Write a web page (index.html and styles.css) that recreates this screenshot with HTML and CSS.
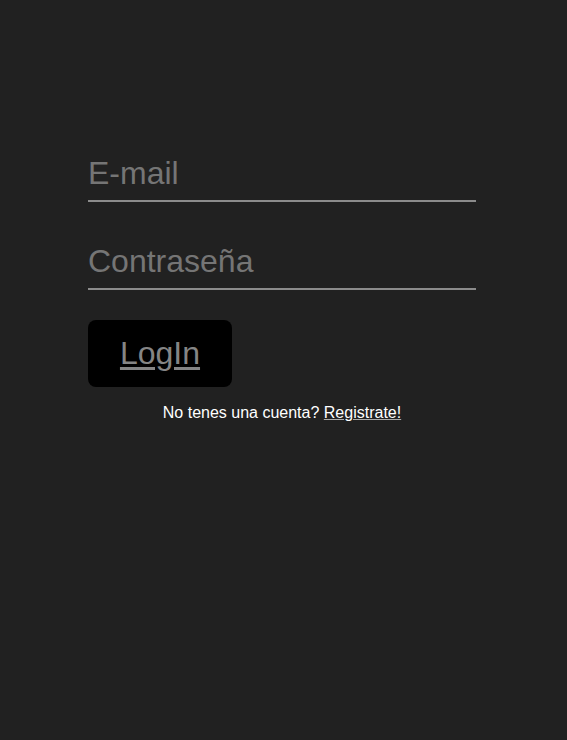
FILE: index.html
```html
<!DOCTYPE html>
<html lang="es">
<head>
<meta charset="utf-8">
<title>Login</title>
<link rel="stylesheet" href="styles.css">
</head>
<body>
<main class="login">
  <form class="login-form">
    <input class="field" type="email" placeholder="E-mail">
    <input class="field field-pass" type="password" placeholder="Contraseña">
    <button class="btn" type="button">LogIn</button>
    <p class="register">No tenes una cuenta? <a href="#" class="register-link">Registrate!</a></p>
  </form>
</main>
</body>
</html>
```
FILE: styles.css
```css
html, body {
  margin: 0;
  padding: 0;
  background: #212121;
  height: 100%;
}
body {
  font-family: "Liberation Sans", Arial, sans-serif;
}
.login {
  padding-top: 151px;
  padding-left: 88px;
}
.login-form {
  width: 388px;
  display: flex;
  flex-direction: column;
  align-items: flex-start;
}
.field {
  display: block;
  box-sizing: border-box;
  width: 100%;
  height: 51px;
  padding: 4px 0 8px;
  margin: 0;
  background: transparent;
  border: none;
  border-bottom: 2px solid #8c8c8c;
  font-family: "Liberation Sans", Arial, sans-serif;
  font-size: 32px;
  color: #cfcfcf;
  outline: none;
}
.field::placeholder {
  color: #757575;
}
.field-pass {
  margin-top: 37px;
}
.btn {
  margin-top: 30px;
  width: 144px;
  height: 67px;
  background: #000;
  border: none;
  border-radius: 8px;
  font-family: "Liberation Sans", Arial, sans-serif;
  font-size: 32px;
  color: #858585;
  text-decoration: underline;
  text-underline-offset: 3px;
  padding: 0;
  cursor: pointer;
}
.register {
  align-self: stretch;
  margin: 17px 0 0;
  text-align: center;
  color: #fff;
  font-size: 16px;
  line-height: 18px;
}
.register-link {
  color: #fff;
  text-decoration: underline;
  text-decoration-color: #aaa;
}
```
